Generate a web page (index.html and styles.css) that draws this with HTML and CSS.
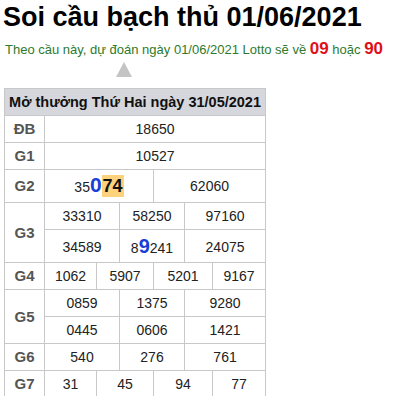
FILE: index.html
```html
<!DOCTYPE html>
<html lang="vi">
<head>
<meta charset="utf-8">
<link rel="stylesheet" href="styles.css">
</head>
<body>
<h1 class="title">Soi cầu bạch thủ 01/06/2021</h1>
<p class="predict">Theo cầu này, dự đoán ngày 01/06/2021 Lotto sẽ về <b class="hot">09</b> hoặc <b class="hot">90</b></p>
<div class="arrow"></div>
<table class="kq">
  <colgroup>
    <col class="c-lbl">
    <col class="c1"><col class="c2"><col class="c3"><col class="c4"><col class="c5"><col class="c6">
  </colgroup>
  <thead>
    <tr><th colspan="7" class="head">Mở thưởng Thứ Hai ngày 31/05/2021</th></tr>
  </thead>
  <tbody>
    <tr><td class="lbl">ĐB</td><td colspan="6">18650</td></tr>
    <tr><td class="lbl">G1</td><td colspan="6">10527</td></tr>
    <tr class="tall"><td class="lbl">G2</td><td colspan="3">35<b class="pick">0</b><b class="mark">74</b></td><td colspan="3">62060</td></tr>
    <tr><td class="lbl" rowspan="2">G3</td><td colspan="2">33310</td><td colspan="2">58250</td><td colspan="2">97160</td></tr>
    <tr class="mid"><td colspan="2">34589</td><td colspan="2">8<b class="pick small">9</b>241</td><td colspan="2">24075</td></tr>
    <tr><td class="lbl">G4</td><td>1062</td><td colspan="2">5907</td><td colspan="2">5201</td><td>9167</td></tr>
    <tr><td class="lbl" rowspan="2">G5</td><td colspan="2">0859</td><td colspan="2">1375</td><td colspan="2">9280</td></tr>
    <tr><td colspan="2">0445</td><td colspan="2">0606</td><td colspan="2">1421</td></tr>
    <tr><td class="lbl">G6</td><td colspan="2">540</td><td colspan="2">276</td><td colspan="2">761</td></tr>
    <tr><td class="lbl">G7</td><td>31</td><td colspan="2">45</td><td colspan="2">94</td><td>77</td></tr>
  </tbody>
</table>
</body>
</html>
```
FILE: styles.css
```css
html, body {
  margin: 0;
  padding: 0;
  background: #fff;
}
body {
  font-family: "Liberation Sans", Arial, sans-serif;
  color: #222;
  padding: 0 4px;
}
.title {
  margin: 0;
  padding-top: 2px;
  margin-left: -1px;
  font-size: 27px;
  line-height: 31px;
  font-weight: bold;
  color: #000;
}
.predict {
  margin: 7px 0 0 1px;
  font-size: 13px;
  line-height: 18px;
  color: #2d7a2d;
}
.hot {
  color: #e0101a;
  font-size: 17px;
}
.arrow {
  width: 0;
  height: 0;
  margin: 3px 0 0 112px;
  border-left: 8px solid transparent;
  border-right: 8px solid transparent;
  border-bottom: 15px solid #c4c4c4;
}
.kq {
  margin-top: 11px;
  border-collapse: collapse;
  table-layout: fixed;
  width: 262px;
  font-size: 14px;
}
.c-lbl { width: 40px; }
.c1 { width: 52px; }
.c2 { width: 23px; }
.c3 { width: 34px; }
.c4 { width: 31px; }
.c5 { width: 28px; }
.c6 { width: 53px; }
.kq th, .kq td {
  border: 1px solid #c8c8c8;
  text-align: center;
  padding: 4px 0;
  line-height: 18px;
  white-space: nowrap;
}
.head {
  background: #d5d7dd;
  font-size: 14.5px;
  font-weight: bold;
  color: #111;
  padding: 3px 0;
}
.lbl {
  font-weight: bold;
  color: #555;
  font-size: 15px;
}
.tall td {
  padding: 6px 0;
}
.pick {
  color: #1a3fd6;
  font-size: 21px;
  font-weight: bold;
}
.pick.small {
  font-size: 20px;
}
.mark {
  background: #fcd27c;
  color: #111;
  font-size: 18px;
  font-weight: bold;
  padding: 1px 1px;
}
.mid td {
  padding: 7px 0 5px;
}
```
